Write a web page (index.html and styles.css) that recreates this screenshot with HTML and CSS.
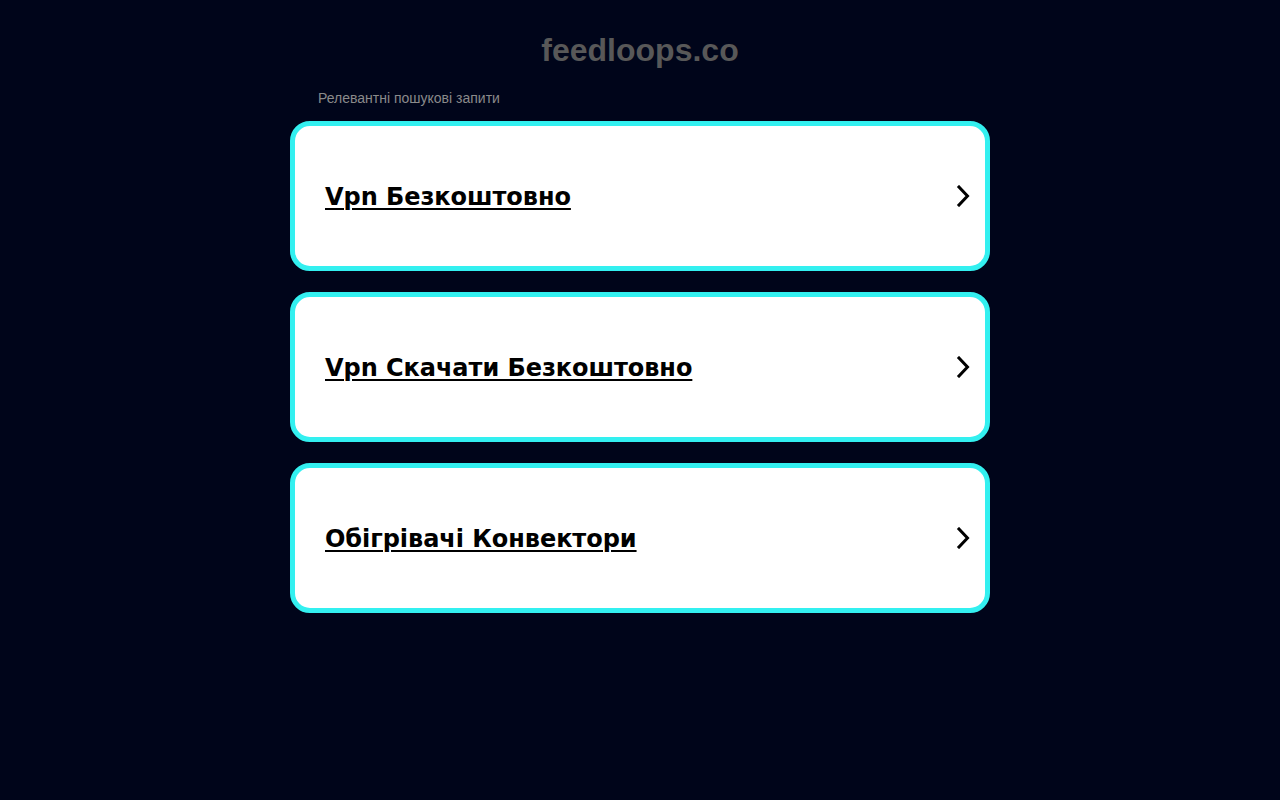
FILE: index.html
```html
<!DOCTYPE html>
<html lang="uk">
<head>
<meta charset="utf-8">
<title>feedloops.co</title>
<link rel="stylesheet" href="styles.css">
</head>
<body>
<div class="page">
  <h1 class="domain">feedloops.co</h1>
  <div class="related">Релевантні пошукові запити</div>
  <div class="list">
    <a class="card" href="#"><span class="label">Vpn Безкоштовно</span><svg class="chev" width="14" height="22" viewBox="0 0 14 22"><path d="M3 2 L11.5 11 L3 20" fill="none" stroke="#000" stroke-width="3" stroke-linecap="square"/></svg></a>
    <a class="card" href="#"><span class="label">Vpn Скачати Безкоштовно</span><svg class="chev" width="14" height="22" viewBox="0 0 14 22"><path d="M3 2 L11.5 11 L3 20" fill="none" stroke="#000" stroke-width="3" stroke-linecap="square"/></svg></a>
    <a class="card" href="#"><span class="label">Обігрівачі Конвектори</span><svg class="chev" width="14" height="22" viewBox="0 0 14 22"><path d="M3 2 L11.5 11 L3 20" fill="none" stroke="#000" stroke-width="3" stroke-linecap="square"/></svg></a>
  </div>
</div>
</body>
</html>
```
FILE: styles.css
```css
html, body {
  margin: 0;
  padding: 0;
  background: #00051a;
  height: 100%;
}
.page {
  width: 700px;
  margin: 0 auto;
  padding-top: 30px;
}
.domain {
  margin: 0;
  text-align: center;
  font-family: "Liberation Sans", Arial, sans-serif;
  font-weight: bold;
  font-size: 32px;
  line-height: 40px;
  color: #585858;
}
.related {
  margin: 19px 0 0 28px;
  font-family: "Liberation Sans", Arial, sans-serif;
  font-size: 14px;
  line-height: 18px;
  color: #8a8a8a;
}
.list {
  margin-top: 14px;
  display: flex;
  flex-direction: column;
  gap: 21px;
}
.card {
  box-sizing: border-box;
  height: 150px;
  border: 5px solid #33f0f0;
  border-radius: 20px;
  background: #fff;
  display: flex;
  align-items: center;
  justify-content: space-between;
  padding: 2px 15px 0 30px;
  text-decoration: none;
}
.label {
  font-family: "DejaVu Sans", sans-serif;
  font-weight: bold;
  font-size: 24px;
  letter-spacing: -0.05px;
  color: #000;
  text-decoration: underline;
  text-underline-offset: 3px;
  text-decoration-thickness: 2px;
}
.chev {
  display: block;
  margin-top: -2px;
}
```
